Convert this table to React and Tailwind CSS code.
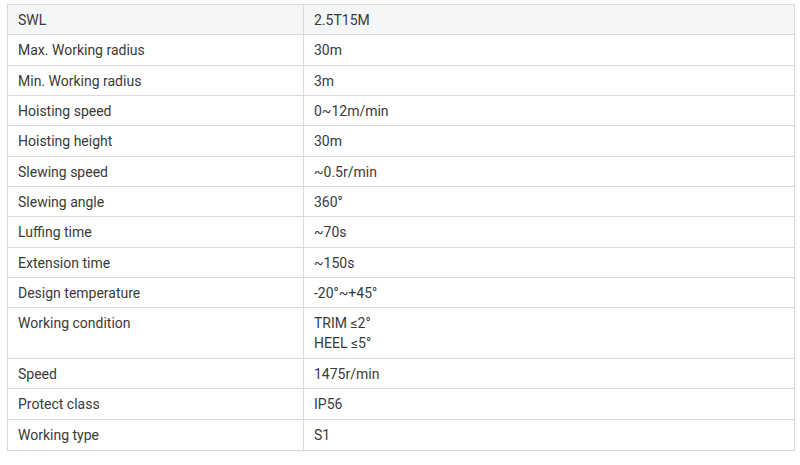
const specs = [
    ["SWL", ["2.5T15M"]],
    ["Max. Working radius", ["30m"]],
    ["Min. Working radius", ["3m"]],
    ["Hoisting speed", ["0~12m/min"]],
    ["Hoisting height", ["30m"]],
    ["Slewing speed", ["~0.5r/min"]],
    ["Slewing angle", ["360°"]],
    ["Luffing time", ["~70s"]],
    ["Extension time", ["~150s"]],
    ["Design temperature", ["-20°~+45°"]],
    ["Working condition", ["TRIM ≤2°", "HEEL ≤5°"]],
    ["Speed", ["1475r/min"]],
    ["Protect class", ["IP56"]],
    ["Working type", ["S1"]],
];

const App = () => {
    return (
        <div className="w-[800px] h-[465px] bg-white pt-[4px] pl-[7px]" style={{ fontFamily: "Roboto, 'Noto Sans', sans-serif" }}>
            <div className="w-[788px] border border-[#dadada] shadow-[0_0_2px_rgba(0,0,0,0.08)] text-[14px] text-[#3a3a3a]">
                {specs.map(([label, values], i) => (
                    <div
                        key={label}
                        className={`flex border-b border-[#dadada] last:border-b-0 ${i === 0 ? "bg-[#f5f6f8]" : "bg-white"} ${values.length > 1 ? "h-[50.4px]" : "h-[30.35px]"}`}
                    >
                        <div className="w-[296px] shrink-0 border-r border-[#dadada] pl-[10px] pt-[5px] leading-[20px]">{label}</div>
                        <div className="flex-1 pl-[10px] pt-[5px] leading-[20px]">
                            {values.map((v) => (
                                <p key={v}>{v}</p>
                            ))}
                        </div>
                    </div>
                ))}
            </div>
        </div>
    );
};

export default App;
